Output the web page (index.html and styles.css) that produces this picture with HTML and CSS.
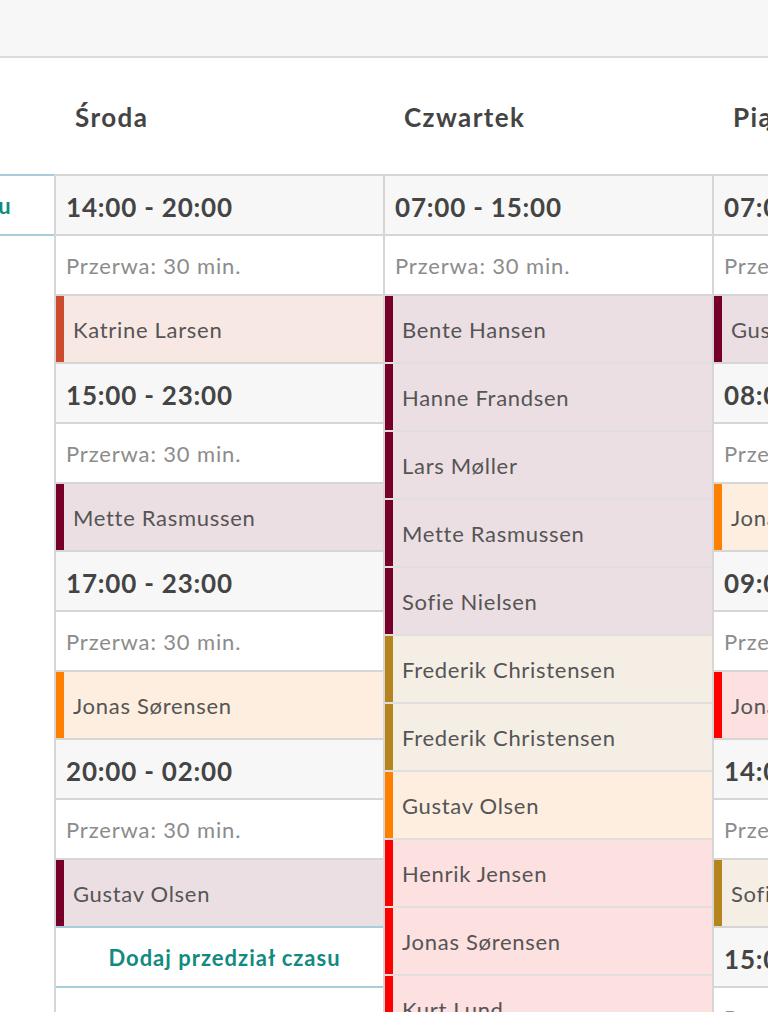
FILE: index.html
```html
<!DOCTYPE html>
<html lang="pl">
<head>
<meta charset="utf-8">
<link rel="stylesheet" href="styles.css">
</head>
<body>
<div class="topbar"></div>
<div class="board">
  <div class="day">
    <div class="day-name">Wtorek</div>
    <div class="slots no-border">
      <div class="add">Dodaj przedział czasu</div>
    </div>
  </div>

  <div class="day">
    <div class="day-name">Środa</div>
    <div class="slots">
      <div class="time">14:00 - 20:00</div>
      <div class="break">Przerwa: 30 min.</div>
      <div class="person c-rust">Katrine Larsen</div>
      <div class="time">15:00 - 23:00</div>
      <div class="break">Przerwa: 30 min.</div>
      <div class="person c-wine">Mette Rasmussen</div>
      <div class="time">17:00 - 23:00</div>
      <div class="break">Przerwa: 30 min.</div>
      <div class="person c-orange">Jonas Sørensen</div>
      <div class="time">20:00 - 02:00</div>
      <div class="break">Przerwa: 30 min.</div>
      <div class="person c-wine">Gustav Olsen</div>
      <div class="add">Dodaj przedział czasu</div>
    </div>
  </div>

  <div class="day">
    <div class="day-name">Czwartek</div>
    <div class="slots">
      <div class="time">07:00 - 15:00</div>
      <div class="break">Przerwa: 30 min.</div>
      <div class="person c-wine">Bente Hansen</div>
      <div class="person c-wine">Hanne Frandsen</div>
      <div class="person c-wine">Lars Møller</div>
      <div class="person c-wine">Mette Rasmussen</div>
      <div class="person c-wine">Sofie Nielsen</div>
      <div class="person c-gold">Frederik Christensen</div>
      <div class="person c-gold">Frederik Christensen</div>
      <div class="person c-orange">Gustav Olsen</div>
      <div class="person c-red">Henrik Jensen</div>
      <div class="person c-red">Jonas Sørensen</div>
      <div class="person c-red">Kurt Lund</div>
    </div>
  </div>

  <div class="day">
    <div class="day-name">Piątek</div>
    <div class="slots">
      <div class="time">07:00 - 15:00</div>
      <div class="break">Przerwa: 30 min.</div>
      <div class="person c-wine">Gustav Olsen</div>
      <div class="time">08:00 - 16:00</div>
      <div class="break">Przerwa: 30 min.</div>
      <div class="person c-orange">Jonas Sørensen</div>
      <div class="time">09:00 - 17:00</div>
      <div class="break">Przerwa: 30 min.</div>
      <div class="person c-red">Jonas Sørensen</div>
      <div class="time">14:00 - 22:00</div>
      <div class="break">Przerwa: 30 min.</div>
      <div class="person c-gold">Sofie Nielsen</div>
      <div class="time">15:00 - 23:00</div>
      <div class="break">Przerwa: 30 min.</div>
    </div>
  </div>
</div>
</body>
</html>
```

FILE: styles.css
```css
* { box-sizing: border-box; }
html, body {
  margin: 0;
  padding: 0;
  height: 1012px;
  overflow: hidden;
  background: #fff;
  font-family: Lato, "Open Sans", Arial, sans-serif;
}
.topbar {
  height: 58px;
  background: #f7f7f7;
  border-bottom: 2px solid #dcdcdc;
}
.board {
  display: flex;
  margin-left: -275px;
}
.day {
  flex: 0 0 329px;
  width: 329px;
}
.day-name {
  height: 116px;
  display: flex;
  align-items: center;
  padding-left: 21px;
  padding-top: 2px;
  font-size: 26px;
  font-weight: 700;
  letter-spacing: 1.4px;
  color: #444;
}
.slots {
  border-left: 2px solid #d6d6d6;
  min-height: 900px;
  display: flex;
  flex-direction: column;
}
.slots.no-border { border-left-color: transparent; }
.time {
  height: 60px;
  border-top: 2px solid #d6d6d6;
  background: #f7f7f7;
  display: flex;
  align-items: center;
  padding-left: 10px;
  padding-top: 3px;
  font-size: 26px;
  font-weight: 700;
  letter-spacing: 0.8px;
  color: #444;
}
.break {
  height: 60px;
  border-top: 2px solid #d6d6d6;
  background: #fff;
  display: flex;
  align-items: center;
  padding-left: 10px;
  padding-top: 1px;
  font-size: 22px;
  letter-spacing: 0.85px;
  color: #8c8c8c;
}
.person {
  height: 68px;
  border-top: 2px solid #d6d6d6;
  display: flex;
  align-items: center;
  padding-left: 17px;
  font-size: 22px;
  letter-spacing: 0.7px;
  color: #555;
  position: relative;
}
.person::before {
  content: "";
  position: absolute;
  left: 0;
  top: 0;
  bottom: 0;
  width: 8px;
  background: var(--accent);
}
.person + .person { border-top-color: #e2dede; }
.c-wine { --accent: #77002a; background: #ecdfe3; }
.c-rust { --accent: #cc4a2e; background: #f8e8e4; }
.c-orange { --accent: #ff7f00; background: #fdeee0; }
.c-gold { --accent: #b5841c; background: #f5eee5; }
.c-red { --accent: #ff0000; background: #fde0e0; }
.add {
  height: 62px;
  border-top: 2px solid #a8cfd9;
  border-bottom: 2px solid #a8cfd9;
  background: #fff;
  display: flex;
  align-items: center;
  justify-content: center;
  padding-left: 10px;
  font-size: 22px;
  font-weight: 700;
  letter-spacing: 1px;
  color: #138a80;
}
```
